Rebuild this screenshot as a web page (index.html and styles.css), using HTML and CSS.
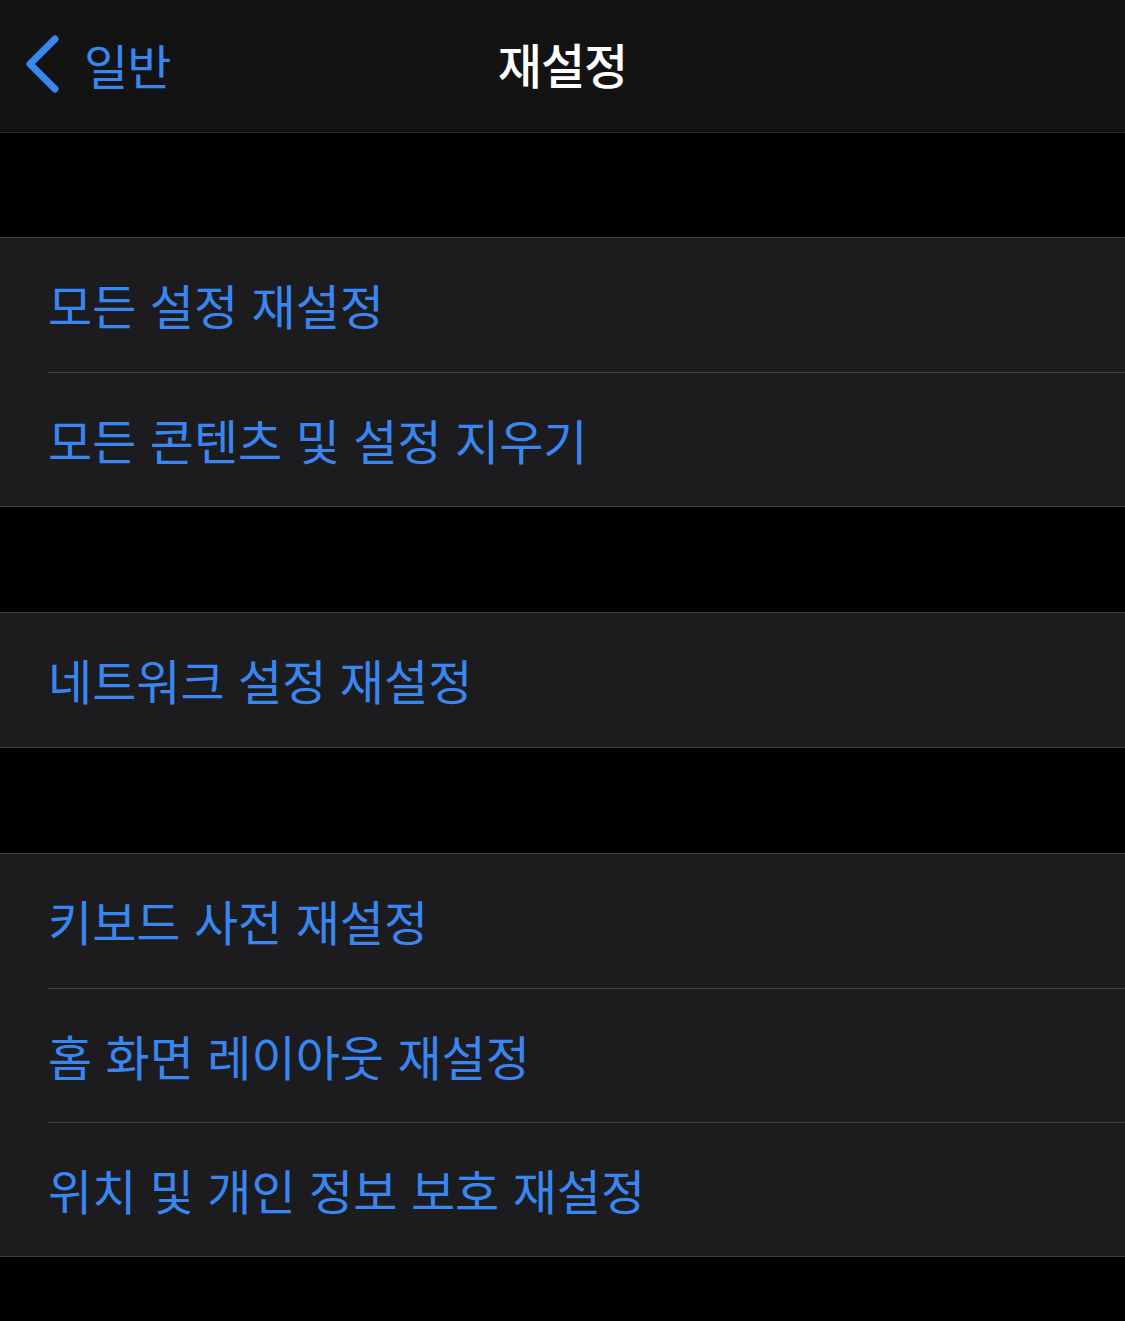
FILE: index.html
```html
<!DOCTYPE html>
<html lang="ko">
<head>
    <meta charset="UTF-8">
    <meta name="viewport" content="width=device-width, initial-scale=1.0">
    <title>재설정</title>
    <link rel="stylesheet" href="styles.css">
</head>
<body>
    <div class="nav-bar">
        <a class="back-button" href="#">
            <svg class="chevron" width="36" height="58" viewBox="0 0 36 58">
                <path d="M31 4 L6 29 L31 54" fill="none" stroke="#3a86f0" stroke-width="7" stroke-linecap="round" stroke-linejoin="round"/>
            </svg>
            <span class="back-label">일반</span>
        </a>
        <div class="nav-title">재설정</div>
    </div>

    <div class="group">
        <div class="row">모든 설정 재설정</div>
        <div class="row">모든 콘텐츠 및 설정 지우기</div>
    </div>

    <div class="group">
        <div class="row">네트워크 설정 재설정</div>
    </div>

    <div class="group">
        <div class="row">키보드 사전 재설정</div>
        <div class="row">홈 화면 레이아웃 재설정</div>
        <div class="row">위치 및 개인 정보 보호 재설정</div>
    </div>
</body>
</html>
```

FILE: styles.css
```css
body {
    margin: 0;
    background-color: #000;
    font-family: "Noto Sans CJK KR", "Noto Sans", sans-serif;
    color: #3a86f0;
}
.nav-bar {
    position: relative;
    height: 132px;
    background-color: #131313;
    border-bottom: 1px solid #2a2a2c;
    display: flex;
    align-items: center;
}
.back-button {
    display: flex;
    align-items: center;
    text-decoration: none;
    color: #3a86f0;
    padding-left: 24px;
    margin-top: -4px;
}
.chevron {
    margin-right: 24px;
}
.back-label {
    font-size: 48px;
    letter-spacing: -1px;
}
.nav-title {
    position: absolute;
    left: 0;
    right: 0;
    top: 28px;
    text-align: center;
    color: #fff;
    font-size: 48px;
    font-weight: 500;
    letter-spacing: -1px;
    pointer-events: none;
}
.group {
    margin-top: 105px;
    background-color: #1c1c1e;
    border-top: 1px solid #3d3d40;
    border-bottom: 1px solid #3d3d40;
    padding-left: 48px;
}
.nav-bar + .group {
    margin-top: 104px;
}
.row {
    box-sizing: border-box;
    height: 134px;
    display: flex;
    align-items: center;
    font-size: 48px;
    padding-bottom: 2px;
}
.row + .row {
    border-top: 1px solid #3d3d40;
}
```
